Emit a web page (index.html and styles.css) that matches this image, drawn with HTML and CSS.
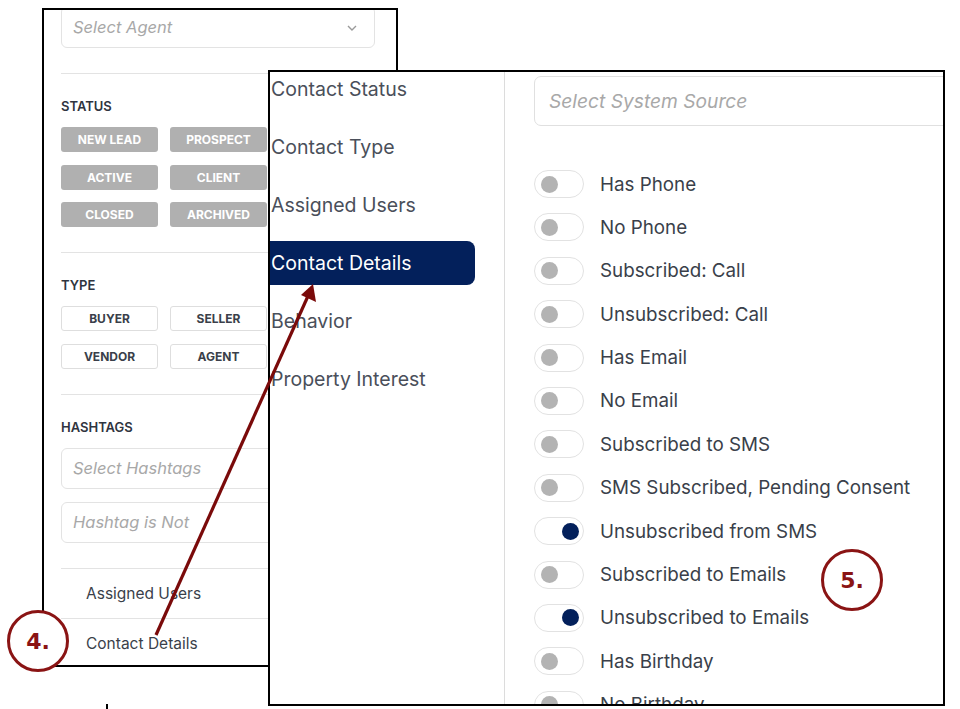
FILE: index.html
```html
<!DOCTYPE html>
<html lang="en">
<head>
    <meta charset="UTF-8">
    <meta name="viewport" content="width=device-width, initial-scale=1.0">
    <title>Contact Filters</title>
    <link rel="stylesheet" href="styles.css">
</head>
<body>
<div class="stage">

    <!-- left filter sidebar (cropped) -->
    <section class="filters">
        <div class="select">
            <span class="placeholder">Select Agent</span>
            <svg class="chevron" width="12" height="8" viewBox="0 0 12 8"><path d="M2 2l4 4 4-4" fill="none" stroke="#9a9a9a" stroke-width="1.4"/></svg>
        </div>
        <div class="divider"></div>

        <div class="group-title">STATUS</div>
        <div class="chip-grid">
            <span class="chip filled">NEW LEAD</span>
            <span class="chip filled">PROSPECT</span>
            <span class="chip filled">ACTIVE</span>
            <span class="chip filled">CLIENT</span>
            <span class="chip filled">CLOSED</span>
            <span class="chip filled">ARCHIVED</span>
        </div>
        <div class="divider"></div>

        <div class="group-title">TYPE</div>
        <div class="chip-grid">
            <span class="chip outline">BUYER</span>
            <span class="chip outline">SELLER</span>
            <span class="chip outline">VENDOR</span>
            <span class="chip outline">AGENT</span>
        </div>
        <div class="divider"></div>

        <div class="group-title">HASHTAGS</div>
        <div class="select tag-input"><span class="placeholder">Select Hashtags</span></div>
        <div class="select tag-input second"><span class="placeholder">Hashtag is Not</span></div>
        <div class="divider"></div>

        <div class="side-link">Assigned Users</div>
        <div class="divider tight"></div>
        <div class="side-link">Contact Details</div>
    </section>

    <!-- contact details dialog -->
    <section class="details">
        <nav class="detail-nav">
            <div class="nav-item">Contact Status</div>
            <div class="nav-item">Contact Type</div>
            <div class="nav-item">Assigned Users</div>
            <div class="nav-item active">Contact Details</div>
            <div class="nav-item">Behavior</div>
            <div class="nav-item">Property Interest</div>
        </nav>
        <div class="detail-body">
            <div class="source-select"><span class="placeholder">Select System Source</span></div>
            <ul class="toggle-list">
                <li><span class="toggle"></span>Has Phone</li>
                <li><span class="toggle"></span>No Phone</li>
                <li><span class="toggle"></span>Subscribed: Call</li>
                <li><span class="toggle"></span>Unsubscribed: Call</li>
                <li><span class="toggle"></span>Has Email</li>
                <li><span class="toggle"></span>No Email</li>
                <li><span class="toggle"></span>Subscribed to SMS</li>
                <li><span class="toggle"></span>SMS Subscribed, Pending Consent</li>
                <li><span class="toggle on"></span>Unsubscribed from SMS</li>
                <li><span class="toggle"></span>Subscribed to Emails</li>
                <li><span class="toggle on"></span>Unsubscribed to Emails</li>
                <li><span class="toggle"></span>Has Birthday</li>
                <li><span class="toggle"></span>No Birthday</li>
            </ul>
        </div>
    </section>

    <!-- annotations -->
    <svg class="arrow" width="960" height="709" viewBox="0 0 960 709">
        <line x1="156" y1="635" x2="308" y2="296" stroke="#7a0a0a" stroke-width="3.2"/>
        <polygon points="313,284 316,302 301,295" fill="#7a0a0a"/>
    </svg>
    <div class="step step-4">4.</div>
    <div class="step step-5">5.</div>
    <div class="tick"></div>
</div>
</body>
</html>
```

FILE: styles.css
```css
html, body {
    margin: 0;
    padding: 0;
    background: #fff;
}
.stage {
    position: relative;
    width: 960px;
    height: 709px;
    overflow: hidden;
    font-family: Inter, "Open Sans", sans-serif;
    color: #3a3f4a;
}

/* ---- left sidebar ---- */
.filters {
    position: absolute;
    left: 42px;
    top: 8px;
    width: 356px;
    height: 659px;
    box-sizing: border-box;
    border: 2px solid #000;
    overflow: hidden;
    padding: 0 21px 0 17px;
}
.select {
    position: relative;
    height: 42px;
    margin-top: -4px;
    box-sizing: border-box;
    border: 1px solid #e3e3e3;
    border-radius: 6px;
    display: flex;
    align-items: center;
    padding-left: 11px;
}
.placeholder {
    font-style: italic;
    color: #a8a8a8;
    font-size: 16.5px;
}
.chevron {
    position: absolute;
    right: 16px;
    top: 17px;
}
.divider {
    height: 1px;
    background: #e3e3e3;
    margin-top: 25px;
}
.group-title {
    margin-top: 24px;
    font-size: 13px;
    line-height: 16px;
    font-weight: 600;
    color: #2f3440;
}
.chip-grid {
    display: grid;
    grid-template-columns: 97px 97px;
    column-gap: 12px;
    row-gap: 12.5px;
    margin-top: 13px;
}
.chip {
    height: 25px;
    box-sizing: border-box;
    border-radius: 3px;
    font-size: 12px;
    font-weight: 700;
    display: flex;
    align-items: center;
    justify-content: center;
}
.chip.filled {
    background: #b0b0b0;
    color: #fff;
}
.chip.outline {
    background: #fff;
    border: 1px solid #dedede;
    color: #3a3f4a;
}
.tag-input {
    height: 41px;
    margin-top: 13px;
    margin-right: -60px;
}
.tag-input.second {
    margin-top: 13px;
}
.side-link {
    padding-left: 25px;
    font-size: 15.5px;
    line-height: 26px;
    margin-top: 12px;
    color: #3a3f4a;
}
.divider.tight {
    margin-top: 11px;
}

/* ---- details dialog ---- */
.details {
    position: absolute;
    left: 268px;
    top: 70px;
    width: 677px;
    height: 636px;
    box-sizing: border-box;
    border: 2px solid #000;
    background: #fff;
    overflow: hidden;
    display: flex;
}
.detail-nav {
    width: 234px;
    flex-shrink: 0;
    border-right: 1px solid #dcdcdc;
    margin-top: -5px;
}
.nav-item {
    height: 44px;
    line-height: 44px;
    margin-bottom: 14px;
    padding-left: 1px;
    font-size: 19.5px;
    color: #4a4f5a;
    width: 204px;
    box-sizing: border-box;
}
.nav-item.active {
    background: #03205b;
    color: #fff;
    border-radius: 0 8px 8px 0;
    margin-left: -2px;
    padding-left: 3px;
    width: 207px;
}
.detail-body {
    padding-left: 29px;
    flex: 1;
}
.source-select {
    width: 460px;
    height: 50px;
    margin-top: 4px;
    box-sizing: border-box;
    border: 1px solid #e0e0e0;
    border-radius: 7px;
    display: flex;
    align-items: center;
    padding-left: 14px;
}
.source-select .placeholder {
    font-size: 19.2px;
}
.toggle-list {
    list-style: none;
    margin: 44px 0 0;
    padding: 0;
}
.toggle-list li {
    height: 28px;
    margin-bottom: 15.4px;
    display: flex;
    align-items: center;
    font-size: 18.8px;
    color: #3a3f4a;
    white-space: nowrap;
}
.toggle {
    position: relative;
    width: 50px;
    height: 28px;
    box-sizing: border-box;
    border: 1px solid #e2e2e2;
    border-radius: 14px;
    background: #fff;
    margin-right: 16px;
    flex-shrink: 0;
}
.toggle::after {
    content: "";
    position: absolute;
    left: 6px;
    top: 4.5px;
    width: 17px;
    height: 17px;
    border-radius: 50%;
    background: #b3b3b3;
}
.toggle.on::after {
    left: 27px;
    background: #03205b;
}

/* ---- annotations ---- */
.arrow {
    position: absolute;
    left: 0;
    top: 0;
    pointer-events: none;
}
.step {
    position: absolute;
    width: 56px;
    height: 56px;
    border: 3px solid #8a1414;
    border-radius: 50%;
    display: flex;
    align-items: center;
    justify-content: center;
    font-family: "DejaVu Sans", sans-serif;
    font-weight: 700;
    font-size: 22px;
    color: #8a1414;
    background: #fff;
}
.step-4 {
    left: 7px;
    top: 610px;
}
.step-5 {
    left: 821px;
    top: 549px;
    background: transparent;
}
.tick {
    position: absolute;
    left: 106px;
    top: 704px;
    width: 2px;
    height: 6px;
    background: #000;
}
```
